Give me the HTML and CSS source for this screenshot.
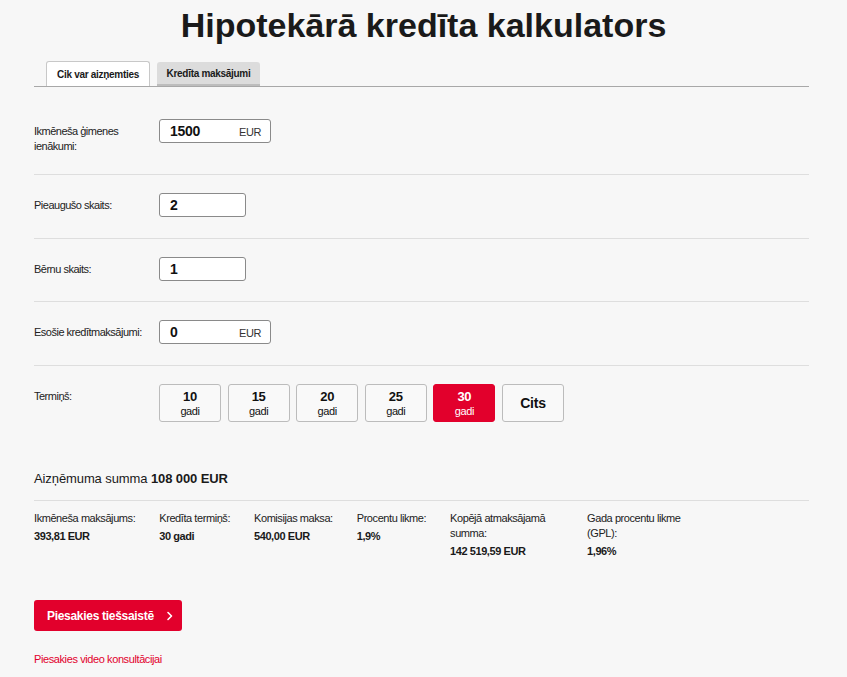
FILE: index.html
```html
<!DOCTYPE html>
<html lang="lv">
<head>
<meta charset="utf-8">
<title>Hipotekārā kredīta kalkulators</title>
<link rel="stylesheet" href="styles.css">
</head>
<body>
<div class="page">
  <h1 class="title">Hipotekārā kredīta kalkulators</h1>
  <div class="tabs">
    <div class="tab tab-active">Cik var aizņemties</div>
    <div class="tab tab-inactive">Kredīta maksājumi</div>
  </div>

  <div class="form">
    <div class="row row-first">
      <div class="label">Ikmēneša ģimenes ienākumi:</div>
      <div class="input input-wide"><span class="val">1500</span><span class="unit">EUR</span></div>
    </div>
    <div class="row">
      <div class="label">Pieaugušo skaits:</div>
      <div class="input input-narrow"><span class="val">2</span></div>
    </div>
    <div class="row">
      <div class="label">Bērnu skaits:</div>
      <div class="input input-narrow"><span class="val">1</span></div>
    </div>
    <div class="row">
      <div class="label">Esošie kredītmaksājumi:</div>
      <div class="input input-wide"><span class="val">0</span><span class="unit">EUR</span></div>
    </div>
    <div class="row row-last">
      <div class="label">Termiņš:</div>
      <div class="terms">
        <div class="term"><span class="num">10</span><span class="yr">gadi</span></div>
        <div class="term"><span class="num">15</span><span class="yr">gadi</span></div>
        <div class="term"><span class="num">20</span><span class="yr">gadi</span></div>
        <div class="term"><span class="num">25</span><span class="yr">gadi</span></div>
        <div class="term term-active"><span class="num">30</span><span class="yr">gadi</span></div>
        <div class="term term-other"><span class="cits">Cits</span></div>
      </div>
    </div>
  </div>

  <div class="summary">
    <div class="summary-head">Aizņēmuma summa <b>108 000 EUR</b></div>
    <div class="stats">
      <div class="stat"><div class="stat-label">Ikmēneša maksājums:</div><div class="stat-val">393,81 EUR</div></div>
      <div class="stat"><div class="stat-label">Kredīta termiņš:</div><div class="stat-val">30 gadi</div></div>
      <div class="stat"><div class="stat-label">Komisijas maksa:</div><div class="stat-val">540,00 EUR</div></div>
      <div class="stat"><div class="stat-label">Procentu likme:</div><div class="stat-val">1,9%</div></div>
      <div class="stat"><div class="stat-label">Kopējā atmaksājamā summa:</div><div class="stat-val">142 519,59 EUR</div></div>
      <div class="stat"><div class="stat-label">Gada procentu likme (GPL):</div><div class="stat-val">1,96%</div></div>
    </div>
  </div>

  <div class="actions">
    <a class="apply-btn" href="#">Piesakies tiešsaistē
      <svg class="chev" width="8" height="10" viewBox="0 0 8 10"><path d="M2 1.5 L5.5 5 L2 8.5" fill="none" stroke="#fff" stroke-width="1.6" stroke-linecap="round" stroke-linejoin="round"/></svg>
    </a>
    <a class="video-link" href="#">Piesakies video konsultācijai</a>
  </div>
</div>
</body>
</html>
```

FILE: styles.css
```css
* { box-sizing: border-box; }
html, body { margin: 0; padding: 0; background: #f7f7f7; }
body {
  font-family: "Liberation Sans", Arial, Helvetica, sans-serif;
  color: #1a1a1a;
}
.page {
  width: 775px;
  margin-left: 34px;
  padding-top: 5px;
}
.title {
  margin: 0;
  text-align: center;
  font-size: 34px;
  line-height: 40px;
  font-weight: 700;
  color: #1a1a1a;
  margin-left: -34px;
  width: 847px;
}
.tabs {
  display: flex;
  gap: 7px;
  padding-left: 12px;
  margin-top: 16px;
  border-bottom: 1px solid #a8a8a8;
}
.tab {
  width: 104px;
  height: 25px;
  border-radius: 3px 3px 0 0;
  font-size: 10px;
  font-weight: 700;
  letter-spacing: -0.3px;
  display: flex;
  align-items: center;
  justify-content: center;
}
.tab-active {
  background: #fff;
  border: 1px solid #c8c8c8;
  border-bottom: none;
}
.tab-inactive {
  background: #dcdcdc;
  width: 103px;
  margin-top: 1px;
  height: 24px;
  border-bottom: 2px solid #bdbdbd;
}
.form { padding-top: 14px; }
.row {
  display: flex;
  align-items: flex-start;
  padding: 18.3px 0 20.3px;
  border-bottom: 1px solid #dedede;
}
.row-first { padding-top: 18px; padding-bottom: 20px; }
.row-last { border-bottom: none; }
.label {
  width: 125px;
  flex: none;
  padding-top: 5px;
  padding-right: 0;
  font-size: 11px;
  line-height: 15px;
  letter-spacing: -0.5px;
  color: #222;
}
.input {
  height: 24px;
  border: 1px solid #8a8a8a;
  border-radius: 3px;
  background: #fff;
  display: flex;
  align-items: center;
  justify-content: space-between;
  padding: 0 9px 0 10px;
}
.input-wide { width: 112px; }
.input-narrow { width: 87px; }
.val {
  font-size: 14px;
  font-weight: 700;
  letter-spacing: -0.3px;
  color: #111;
}
.unit {
  font-size: 11px;
  letter-spacing: -0.4px;
  color: #333;
  padding-top: 2px;
}
.terms {
  display: flex;
  gap: 6.6px;
}
.term {
  width: 62px;
  height: 38px;
  border: 1px solid #bcbcbc;
  border-radius: 3px;
  background: #f9f9f9;
  display: flex;
  flex-direction: column;
  align-items: center;
  justify-content: center;
  color: #111;
}
.num {
  font-size: 13px;
  font-weight: 700;
  line-height: 15px;
  letter-spacing: -0.3px;
}
.yr {
  font-size: 11px;
  line-height: 14px;
  letter-spacing: -0.4px;
}
.term-active {
  background: #e2002c;
  border-color: #e2002c;
  color: #fff;
}
.cits {
  font-size: 14px;
  font-weight: 700;
  letter-spacing: -0.2px;
}
.summary { padding-top: 29px; }
.summary-head {
  font-size: 13px;
  line-height: 16px;
  letter-spacing: -0.1px;
  padding-bottom: 13px;
  border-bottom: 1px solid #dedede;
  color: #1a1a1a;
}
.summary-head b { font-weight: 700; }
.stats {
  display: flex;
  gap: 24px;
  padding-top: 10px;
}
.stat {
  max-width: 113px;
  font-size: 11px;
  letter-spacing: -0.43px;
  line-height: 15px;
  color: #222;
}
.stat-val {
  font-weight: 700;
  margin-top: 3px;
  color: #1a1a1a;
}
.actions {
  padding-top: 41px;
  display: flex;
  flex-direction: column;
  align-items: flex-start;
}
.apply-btn {
  width: 148px;
  height: 31px;
  background: #e2002c;
  border-radius: 3px;
  color: #fff;
  text-decoration: none;
  font-size: 12px;
  font-weight: 700;
  letter-spacing: -0.3px;
  display: flex;
  align-items: center;
  padding-left: 13px;
  gap: 12px;
}
.chev { display: block; margin-top: 1px; }
.video-link {
  margin-top: 22px;
  font-size: 11px;
  letter-spacing: -0.4px;
  color: #e2002c;
  text-decoration: none;
}
```
